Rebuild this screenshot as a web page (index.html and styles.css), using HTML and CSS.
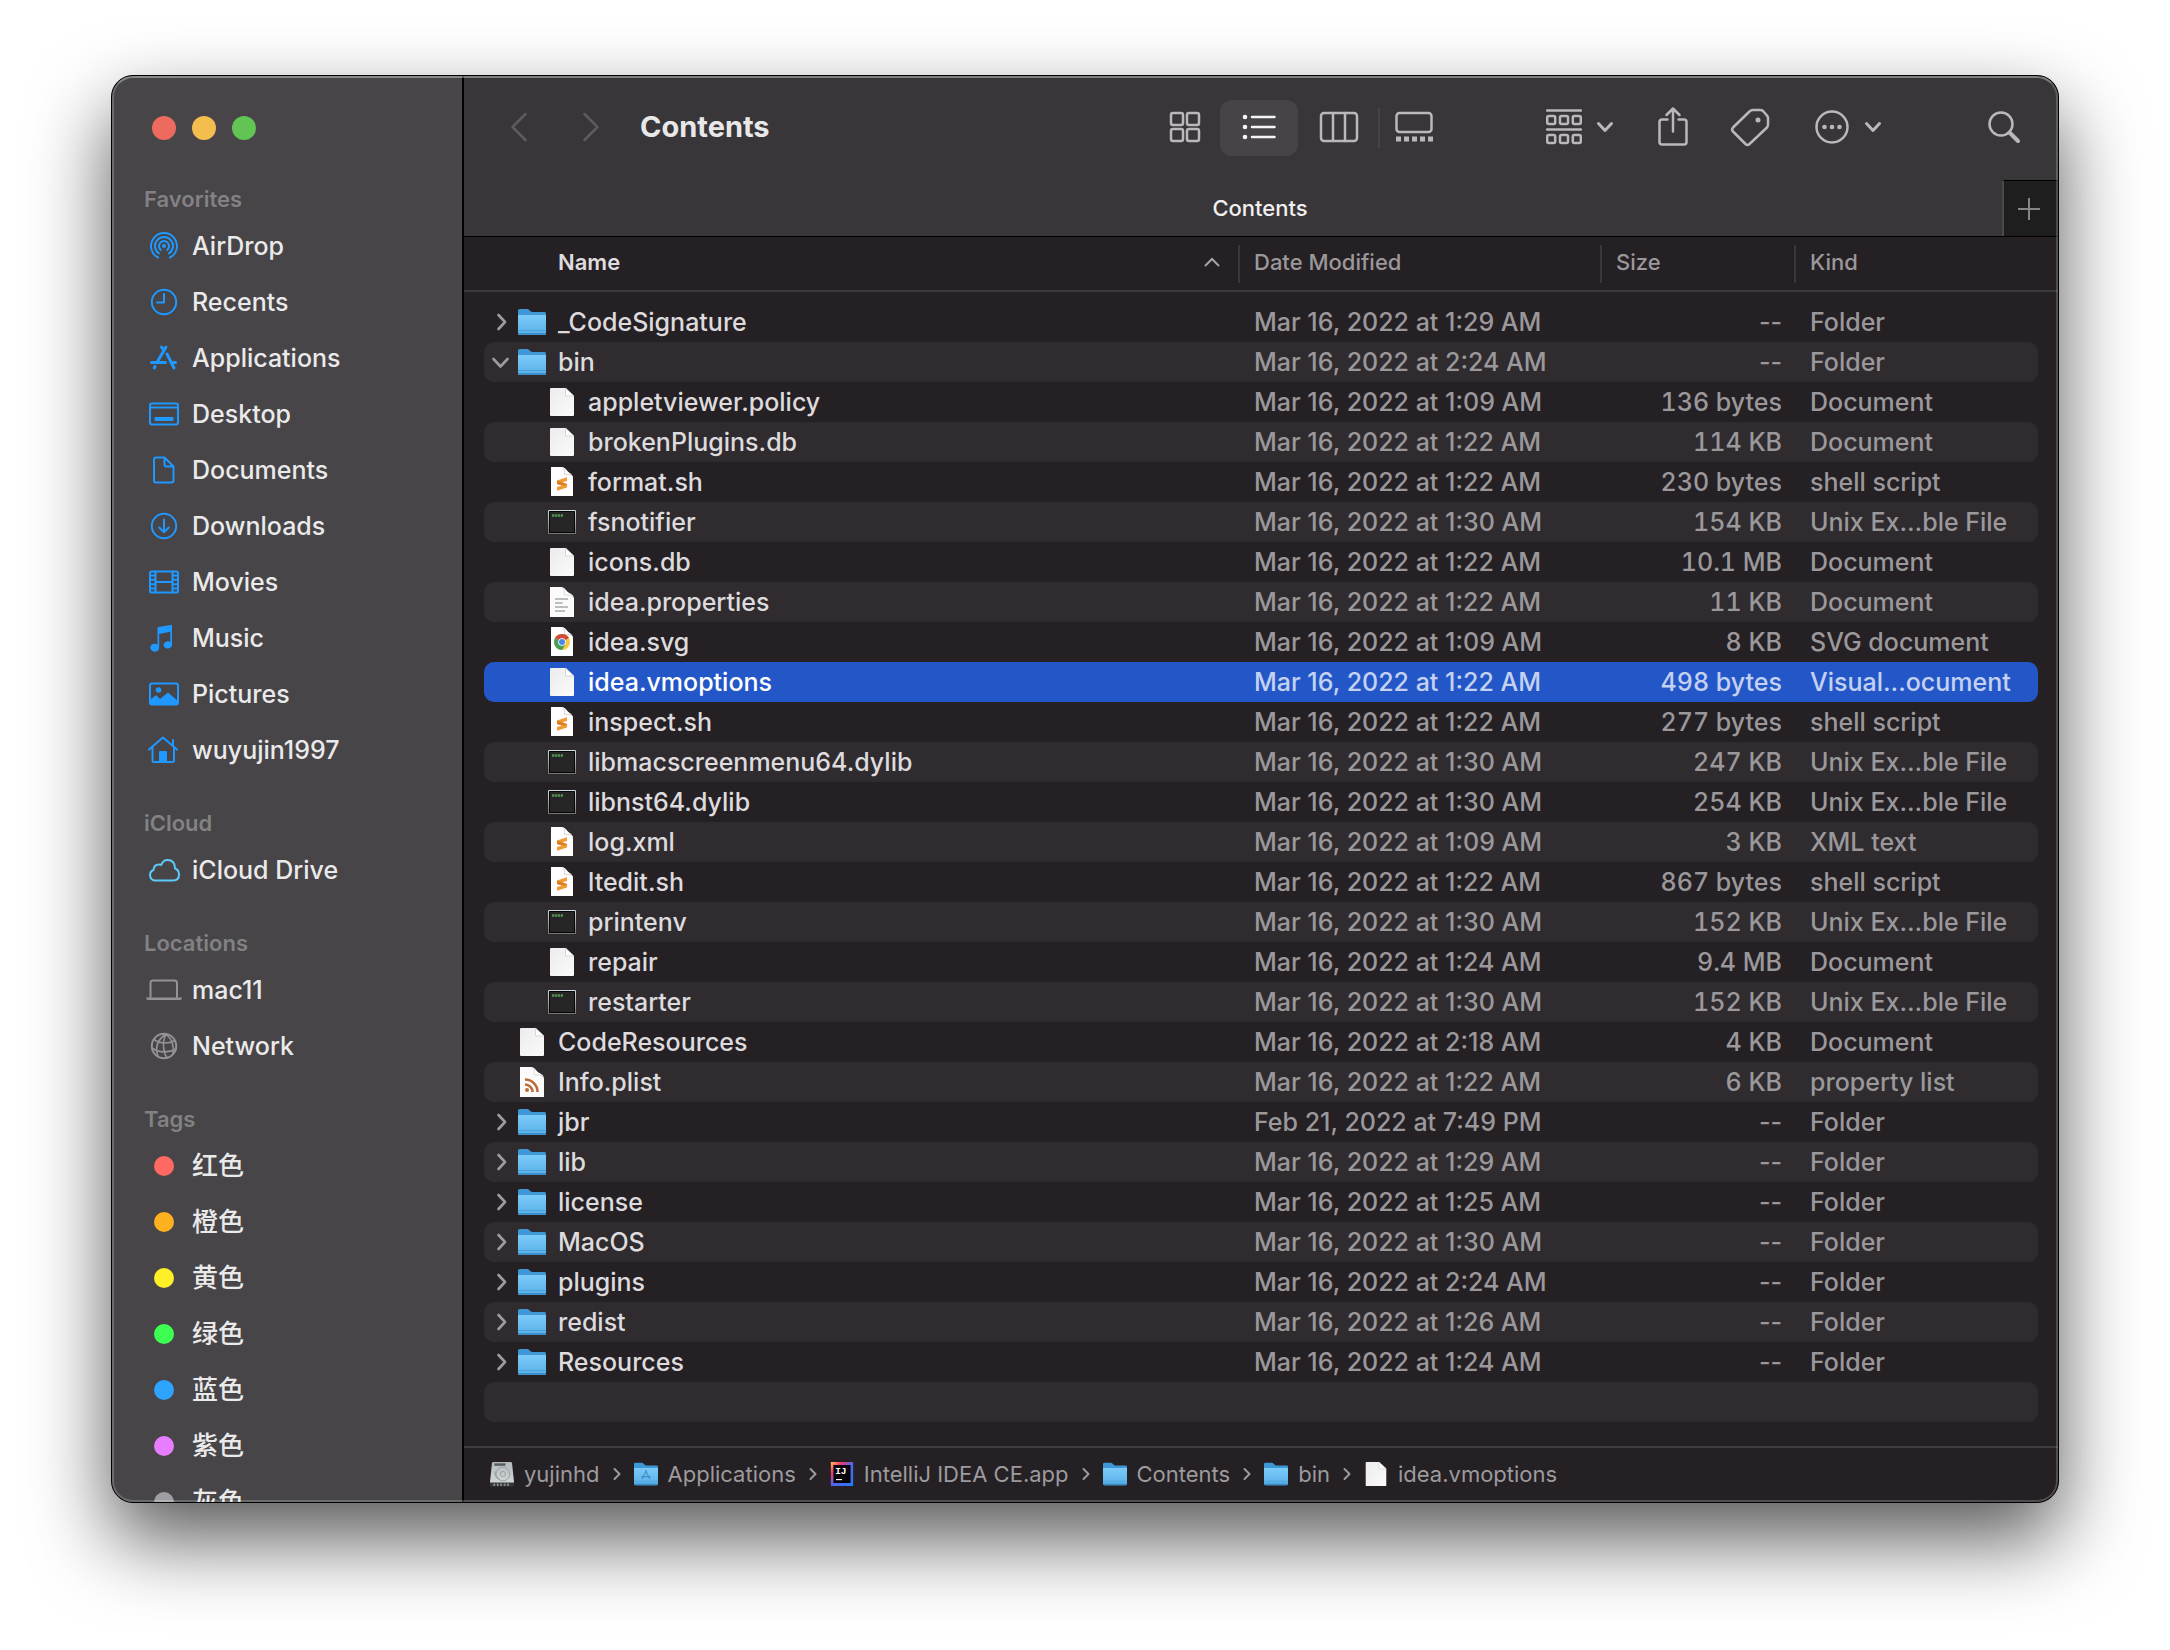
FILE: index.html
```html
<!DOCTYPE html>
<html lang="en">
<head>
<meta charset="utf-8">
<title>Contents</title>
<link rel="stylesheet" href="styles.css">
</head>
<body>
<svg class="defs" aria-hidden="true">
  <defs>
    <linearGradient id="g-folder" x1="0" y1="0" x2="0" y2="1"><stop offset="0" stop-color="#7bcbf8"/><stop offset="1" stop-color="#58b0e8"/></linearGradient>
    <linearGradient id="g-doc" x1="0" y1="0" x2="1" y2="1"><stop offset="0" stop-color="#ececec"/><stop offset="1" stop-color="#fafafa"/></linearGradient>
    <linearGradient id="g-term" x1="0" y1="0" x2="0" y2="1"><stop offset="0" stop-color="#cfdde6"/><stop offset="1" stop-color="#77777a"/></linearGradient>
    <linearGradient id="g-idea" x1="0" y1="0" x2="1" y2="1"><stop offset="0" stop-color="#fcc65a"/><stop offset=".25" stop-color="#f0386b"/><stop offset=".5" stop-color="#5a62f0"/><stop offset="1" stop-color="#1e7cf5"/></linearGradient>
    <linearGradient id="g-disk" x1="0" y1="0" x2="0" y2="1"><stop offset="0" stop-color="#b4b9bb"/><stop offset="1" stop-color="#d5dadd"/></linearGradient>
  </defs>
  <symbol id="folder" viewBox="0 0 28 30">
    <path d="M0 3.500Q0 2 1.500 2H9Q10.200 2 11 2.800L12.500 4.200Q13.300 5 14.500 5H26.500Q28 5 28 6.500V26H0Z" fill="#3f97d6"/>
    <path d="M0 8H28V26.500Q28 28 26.500 28H1.500Q0 28 0 26.500Z" fill="url(#g-folder)"/>
    <path d="M0 23.500H28" stroke="#4ca3dc"/>
    <path d="M0 26V26.500Q0 28 1.500 28H26.500Q28 28 28 26.500V26Z" fill="#3d8fca"/>
  </symbol>
  <symbol id="doc" viewBox="0 0 28 30">
    <path d="M3 1H17.500L26 9V28Q26 29 25 29H3Q2 29 2 28V2Q2 1 3 1Z" fill="url(#g-doc)"/>
    <path d="M17.500 1L26 9H18.500Q17.500 9 17.500 8Z" fill="#fff" stroke="#c6c6c8" stroke-width=".7"/>
  </symbol>
  <symbol id="sheet" viewBox="0 0 28 30">
    <path d="M3 0H14C17 0 19 4 21 5.500C23 7 25 8 25 11V29H3Z" fill="#fff"/>
    <path d="M15 0.500C17 2 16.500 5 16.700 7.500C19.500 7.400 23 7 24.600 9.800" fill="none" stroke="#d2d2d4"/>
  </symbol>
  <symbol id="sh" viewBox="0 0 28 30">
    <use href="#sheet" width="28" height="30"/>
    <path d="M9 13.500L19 10.200V14L14 15.600L19 17V20.500L9 23.800V20L14.200 18.400L9 17Z" fill="#f29a38"/>
    <path d="M9 13.500L19 17V18L14.200 18.400L9 17Z" fill="#dc7f22"/>
  </symbol>
  <symbol id="exec" viewBox="0 0 28 30">
    <rect x="0" y="3" width="28" height="24" rx="1" fill="url(#g-term)"/>
    <rect x="1" y="4" width="26" height="22" fill="#050505"/>
    <rect x="2" y="5" width="24" height="20" fill="#262626"/>
    <path d="M4 8.500H15" stroke="#5fae55" stroke-width="2.400" stroke-dasharray="2.300 .6" opacity=".8"/>
  </symbol>
  <symbol id="props" viewBox="0 0 28 30">
    <path d="M2 0H13C17 0 18 4 20.500 5.500C23 7 26 8 26 12V30H2Z" fill="#fbfbfb"/>
    <path d="M14 .5C17 2 16 5 16.500 8C20 7.500 24 8 25.500 11" fill="#fff" stroke="#dadadc"/>
    <path d="M7 12H20M7 16H14.500M7 20H20M7 24H17" stroke="#bdbdbd" stroke-width="1.800"/>
  </symbol>
  <symbol id="chrome" viewBox="0 0 28 30">
    <use href="#sheet" width="28" height="30"/>
    <circle cx="14" cy="15" r="8" fill="#f6c945"/>
    <path d="M14 15L7.100 11A8 8 0 0 1 20.900 11Z" fill="#d0493b"/>
    <path d="M14 15L7.100 11A8 8 0 0 0 14 23L17.500 17Z" fill="#4a9e5c"/>
    <circle cx="14" cy="15" r="3.800" fill="#fff"/><circle cx="14" cy="15" r="3" fill="#4a86ee"/>
  </symbol>
  <symbol id="plist" viewBox="0 0 28 30">
    <path d="M2 0H13C17 0 18 4 20.500 5.500C23 7 26 8 26 12V30H2Z" fill="#fbfbfb"/>
    <path d="M14 .5C17 2 16 5 16.500 8C20 7.500 24 8 25.500 11" fill="#fff" stroke="#dadadc"/>
    <circle cx="9" cy="23" r="2" fill="#bd6b3a"/>
    <path d="M7 17.500A7.500 7.500 0 0 1 14.500 25M7 12.500A12.500 12.500 0 0 1 19.500 25" fill="none" stroke="#bd6b3a" stroke-width="2.600"/>
  </symbol>
  <symbol id="appfolder" viewBox="0 0 28 30">
    <use href="#folder" width="28" height="30"/>
    <path d="M14.500 10.500L9.500 21M13.500 10.500L18.500 21M8.500 18H19.500" stroke="#3f8fca" stroke-width="1.300" fill="none"/>
  </symbol>
  <symbol id="disk" viewBox="0 0 28 30">
    <path d="M4 1H24Q25.500 1 25.700 2.500L28 24V29H0V24L2.300 2.500Q2.500 1 4 1Z" fill="url(#g-disk)"/>
    <rect x="5" y="2.500" width="13" height="3" fill="#5b5f61"/>
    <circle cx="15" cy="15" r="8" fill="none" stroke="#959b9e"/><circle cx="15" cy="15" r="3" fill="none" stroke="#959b9e"/>
    <path d="M6 12Q5 18 11 21" stroke="#858b8e" fill="none"/>
    <path d="M0 25H28V28Q28 29.500 26.500 29.500H1.500Q0 29.500 0 28Z" fill="#34383a"/>
    <path d="M4 27.500H24" stroke="#8b9092" stroke-width="3" stroke-dasharray="2 2"/>
  </symbol>
  <symbol id="closed" viewBox="0 0 20 20"><path d="M6.500 3L13 10L6.500 17" fill="none" stroke="currentColor" stroke-width="2.600" stroke-linecap="round" stroke-linejoin="round"/></symbol>
  <symbol id="open" viewBox="0 0 20 20"><path d="M1.500 7L8.500 14.500L15.500 7" fill="none" stroke="currentColor" stroke-width="2.600" stroke-linecap="round" stroke-linejoin="round"/></symbol>
  <symbol id="down" viewBox="0 0 18 12"><path d="M2.500 2.500L9 9.500L15.500 2.500" fill="none" stroke="currentColor" stroke-width="3" stroke-linecap="round" stroke-linejoin="round"/></symbol>
  <symbol id="sep" viewBox="0 0 8 14"><path d="M1.500 2L6.500 7L1.500 12" fill="none" stroke="currentColor" stroke-width="2" stroke-linecap="round" stroke-linejoin="round"/></symbol>
</svg>

<div class="window">
  <aside class="sidebar">
    <div class="lights">
      <button class="light light-close" aria-label="Close"></button>
      <button class="light light-min" aria-label="Minimize"></button>
      <button class="light light-zoom" aria-label="Zoom"></button>
    </div>
    <nav class="places">
      <h2>Favorites</h2>
      <a href="#airdrop"><svg viewBox="0 0 36 36"><path d="M12 29.500A13 13 0 1 1 24 29.500M13 25.500A9 9 0 1 1 23 25.500M14.800 21.900A5 5 0 1 1 21.200 21.900"/><circle cx="18" cy="18" r="2" class="fill"/></svg>AirDrop</a>
      <a href="#recents"><svg viewBox="0 0 36 36"><circle cx="18" cy="18" r="12.200"/><path d="M18 10V18.500H11"/></svg>Recents</a>
      <a href="#applications"><svg viewBox="0 0 36 36"><path class="thick" d="M15.500 7L17.800 10.500M20 7L11.500 21.500M5.500 22.500H19.500M21 14L28 28M25 22.500H29.500M9 26.500L8.300 28"/></svg>Applications</a>
      <a href="#desktop"><svg viewBox="0 0 36 36"><rect x="4" y="7.500" width="28" height="21" rx="2"/><path d="M4 11.500H32"/><rect class="fill" x="8.500" y="21" width="19" height="4" rx="1"/></svg>Desktop</a>
      <a href="#documents"><svg viewBox="0 0 36 36"><path d="M10 5.500H18.500L27.500 14.500V28.500Q27.500 30.500 25.500 30.500H10Q8 30.500 8 28.500V7.500Q8 5.500 10 5.500ZM18.500 6V12.500Q18.500 14.500 20.500 14.500H27"/></svg>Documents</a>
      <a href="#downloads"><svg viewBox="0 0 36 36"><circle cx="18" cy="18" r="12.200"/><path d="M18 11.500V24M13.200 19.500L18 24.200L22.800 19.500"/></svg>Downloads</a>
      <a href="#movies"><svg viewBox="0 0 36 36"><rect x="4" y="7.500" width="28" height="21" rx="1.500"/><path d="M9.500 7.500V28.500M26.500 7.500V28.500M9.500 18H26.500M4 11.500H9.500M4 15.800H9.500M4 20.200H9.500M4 24.500H9.500M26.500 11.500H32M26.500 15.800H32M26.500 20.200H32M26.500 24.500H32"/></svg>Movies</a>
      <a href="#music"><svg viewBox="0 0 36 36"><path class="fill" d="M11.500 8Q11.500 7.200 12.300 7L26 4.800V25A4.200 3.600 0 1 1 24.300 22V11.800L13.200 14V27A4.500 4 0 1 1 11.500 24.500Z"/></svg>Music</a>
      <a href="#pictures"><svg viewBox="0 0 36 36"><rect x="4" y="7.500" width="28" height="21" rx="2"/><circle class="fill" cx="12.500" cy="14" r="2.800"/><path class="fill" d="M4 24L10 19L14 23L22 16.500L32 25V28.500H4Z"/></svg>Pictures</a>
      <a href="#home"><svg viewBox="0 0 36 36"><path d="M3 17.500L17 5.500L31 17.500M6.500 15V28.500Q6.500 30 8 30H26.500Q28 30 28 28.500V15M27 13.500V8"/><path class="fill" d="M13 30V20Q13 19 14 19H20Q21 19 21 20V30Z"/></svg>wuyujin1997</a>
      <h2>iCloud</h2>
      <a href="#icloud"><svg class="sky" viewBox="0 0 36 36"><path d="M8.500 28.500A5.500 5.500 0 0 1 7.500 18Q8 12.500 13 12.500Q14.500 12.500 15.200 13Q17 8 21.500 8Q29 8 29 16.500Q33 18 33 22.500Q33 28.500 27 28.500Z"/></svg>iCloud Drive</a>
      <h2>Locations</h2>
      <a href="#mac11"><svg class="gray" viewBox="0 0 36 36"><path d="M4.500 26V11Q4.500 8.500 7 8.500H28.500Q31 8.500 31 11V26"/><path class="fill" d="M0 25.500H36Q36 28 34 28H2Q0 28 0 25.500Z"/></svg>mac11</a>
      <a href="#network"><svg class="gray" viewBox="0 0 36 36"><circle cx="18" cy="18" r="12.200"/><path class="thin" d="M20 6C11 12 9 20 12 28.500M20 6C16 14 17 24 21 30M20 6C27 12 28 20 27 26M8 11.500C14 16 23 16 29 12.500M6 20C13 25 23 25 30 21"/></svg>Network</a>
      <h2>Tags</h2>
      <a href="#red"><span class="tag tag-red"></span><span lang="zh">红色</span></a>
      <a href="#orange"><span class="tag tag-orange"></span><span lang="zh">橙色</span></a>
      <a href="#yellow"><span class="tag tag-yellow"></span><span lang="zh">黄色</span></a>
      <a href="#green"><span class="tag tag-green"></span><span lang="zh">绿色</span></a>
      <a href="#blue"><span class="tag tag-blue"></span><span lang="zh">蓝色</span></a>
      <a href="#purple"><span class="tag tag-purple"></span><span lang="zh">紫色</span></a>
      <a href="#gray"><span class="tag tag-gray"></span><span lang="zh">灰色</span></a>
    </nav>
  </aside>

  <main class="main">
    <header class="toolbar">
      <button class="nav-btn" aria-label="Back"><svg width="18" height="30" viewBox="0 0 18 30"><path d="M15.500 2L2.500 15L15.500 28"/></svg></button>
      <button class="nav-btn" aria-label="Forward"><svg width="18" height="30" viewBox="0 0 18 30"><path d="M2.500 2L15.500 15L2.500 28"/></svg></button>
      <h1>Contents</h1>
      <div class="views">
        <button class="view-btn view-first" aria-label="Icons"><svg width="32" height="32" viewBox="0 0 32 32"><rect x="2" y="2" width="12" height="12" rx="2"/><rect x="18" y="2" width="12" height="12" rx="2"/><rect x="2" y="18" width="12" height="12" rx="2"/><rect x="18" y="18" width="12" height="12" rx="2"/></svg></button>
        <button class="view-btn view-on" aria-label="List"><svg width="34" height="28" viewBox="0 0 34 28"><path d="M10 4H32.500M10 14H32.500M10 24H32.500"/><circle class="fill" cx="3" cy="4" r="2.300"/><circle class="fill" cx="3" cy="14" r="2.300"/><circle class="fill" cx="3" cy="24" r="2.300"/></svg></button>
        <button class="view-btn" aria-label="Columns"><svg width="40" height="32" viewBox="0 0 40 32"><rect x="2" y="2" width="36" height="28" rx="3"/><path d="M14 2V30M26 2V30"/></svg></button>
        <span class="divider"></span>
        <button class="view-btn view-last" aria-label="Gallery"><svg width="38" height="32" viewBox="0 0 38 32"><rect x="1.500" y="2" width="35" height="19" rx="3"/><path class="dashes" d="M1 28H38"/></svg></button>
      </div>
      <button class="tool tool-group" aria-label="Group"><svg width="36" height="38" viewBox="0 0 36 38"><path d="M1 2.500H35M1 21.500H35"/><rect x="1.200" y="8" width="8" height="8" rx="1.500"/><rect x="14" y="8" width="8" height="8" rx="1.500"/><rect x="26.800" y="8" width="8" height="8" rx="1.500"/><rect x="1.200" y="27" width="8" height="8" rx="1.500"/><rect x="14" y="27" width="8" height="8" rx="1.500"/><rect x="26.800" y="27" width="8" height="8" rx="1.500"/></svg><svg class="caret"><use href="#down"/></svg></button>
      <button class="tool tool-share" aria-label="Share"><svg width="32" height="42" viewBox="0 0 32 42"><path d="M10.500 13.500H5Q2.500 13.500 2.500 16V36Q2.500 38.500 5 38.500H27Q29.500 38.500 29.500 36V16Q29.500 13.500 27 13.500H21.500M16 25.500V2.500M9.500 9L16 2.500L22.500 9"/></svg></button>
      <button class="tool tool-tag" aria-label="Tags"><svg width="40" height="40" viewBox="0 0 40 40"><path d="M19.500 4.500Q21 3 23 3H30Q32 3 33 4L36.500 8Q38 9.500 38 11V17.500Q38 19 37 20.500L19.500 37Q17.500 39 15.500 37L3 24.500Q1.200 22.500 3 20.500Z"/><circle class="fill" cx="28" cy="13" r="2.500"/></svg></button>
      <button class="tool tool-more" aria-label="More"><svg width="36" height="36" viewBox="0 0 36 36"><circle cx="18" cy="18" r="15.500"/><circle class="fill" cx="10.500" cy="18" r="2.300"/><circle class="fill" cx="18" cy="18" r="2.300"/><circle class="fill" cx="25.500" cy="18" r="2.300"/></svg><svg class="caret"><use href="#down"/></svg></button>
      <button class="tool tool-search" aria-label="Search"><svg width="34" height="34" viewBox="0 0 34 34"><circle cx="14" cy="14" r="11.500"/><path class="handle" d="M22.500 22.500L31 31"/></svg></button>
    </header>
    <div class="tabs">
      <button class="tab">Contents</button>
      <button class="tab-add" aria-label="New tab"><svg width="22" height="22" viewBox="0 0 22 22"><path d="M11 0V22M0 11H22"/></svg></button>
    </div>

    <div class="files">
      <table>
        <thead>
          <tr><th class="c-name">Name<svg class="sort" viewBox="0 0 16 10"><path d="M1 9L8 2L15 9"/></svg></th><th>Date Modified</th><th>Size</th><th>Kind</th></tr>
        </thead>
        <tbody>
          <tr><td class="c-name"><button class="twist" aria-label="Expand"><svg><use href="#closed"/></svg></button><svg class="icon"><use href="#folder"/></svg>_CodeSignature</td><td>Mar 16, 2022 at 1:29 AM</td><td class="c-none">--</td><td>Folder</td></tr>
          <tr><td class="c-name"><button class="twist" aria-label="Collapse"><svg><use href="#open"/></svg></button><svg class="icon"><use href="#folder"/></svg>bin</td><td>Mar 16, 2022 at 2:24 AM</td><td class="c-none">--</td><td>Folder</td></tr>
          <tr><td class="c-name child"><svg class="icon"><use href="#doc"/></svg>appletviewer.policy</td><td>Mar 16, 2022 at 1:09 AM</td><td class="c-size">136 bytes</td><td>Document</td></tr>
          <tr><td class="c-name child"><svg class="icon"><use href="#doc"/></svg>brokenPlugins.db</td><td>Mar 16, 2022 at 1:22 AM</td><td class="c-size">114 KB</td><td>Document</td></tr>
          <tr><td class="c-name child"><svg class="icon"><use href="#sh"/></svg>format.sh</td><td>Mar 16, 2022 at 1:22 AM</td><td class="c-size">230 bytes</td><td>shell script</td></tr>
          <tr><td class="c-name child"><svg class="icon"><use href="#exec"/></svg>fsnotifier</td><td>Mar 16, 2022 at 1:30 AM</td><td class="c-size">154 KB</td><td>Unix Ex...ble File</td></tr>
          <tr><td class="c-name child"><svg class="icon"><use href="#doc"/></svg>icons.db</td><td>Mar 16, 2022 at 1:22 AM</td><td class="c-size">10.1 MB</td><td>Document</td></tr>
          <tr><td class="c-name child"><svg class="icon"><use href="#props"/></svg>idea.properties</td><td>Mar 16, 2022 at 1:22 AM</td><td class="c-size">11 KB</td><td>Document</td></tr>
          <tr><td class="c-name child"><svg class="icon"><use href="#chrome"/></svg>idea.svg</td><td>Mar 16, 2022 at 1:09 AM</td><td class="c-size">8 KB</td><td>SVG document</td></tr>
          <tr class="selected"><td class="c-name child"><svg class="icon"><use href="#doc"/></svg>idea.vmoptions</td><td>Mar 16, 2022 at 1:22 AM</td><td class="c-size">498 bytes</td><td>Visual...ocument</td></tr>
          <tr><td class="c-name child"><svg class="icon"><use href="#sh"/></svg>inspect.sh</td><td>Mar 16, 2022 at 1:22 AM</td><td class="c-size">277 bytes</td><td>shell script</td></tr>
          <tr><td class="c-name child"><svg class="icon"><use href="#exec"/></svg>libmacscreenmenu64.dylib</td><td>Mar 16, 2022 at 1:30 AM</td><td class="c-size">247 KB</td><td>Unix Ex...ble File</td></tr>
          <tr><td class="c-name child"><svg class="icon"><use href="#exec"/></svg>libnst64.dylib</td><td>Mar 16, 2022 at 1:30 AM</td><td class="c-size">254 KB</td><td>Unix Ex...ble File</td></tr>
          <tr><td class="c-name child"><svg class="icon"><use href="#sh"/></svg>log.xml</td><td>Mar 16, 2022 at 1:09 AM</td><td class="c-size">3 KB</td><td>XML text</td></tr>
          <tr><td class="c-name child"><svg class="icon"><use href="#sh"/></svg>ltedit.sh</td><td>Mar 16, 2022 at 1:22 AM</td><td class="c-size">867 bytes</td><td>shell script</td></tr>
          <tr><td class="c-name child"><svg class="icon"><use href="#exec"/></svg>printenv</td><td>Mar 16, 2022 at 1:30 AM</td><td class="c-size">152 KB</td><td>Unix Ex...ble File</td></tr>
          <tr><td class="c-name child"><svg class="icon"><use href="#doc"/></svg>repair</td><td>Mar 16, 2022 at 1:24 AM</td><td class="c-size">9.4 MB</td><td>Document</td></tr>
          <tr><td class="c-name child"><svg class="icon"><use href="#exec"/></svg>restarter</td><td>Mar 16, 2022 at 1:30 AM</td><td class="c-size">152 KB</td><td>Unix Ex...ble File</td></tr>
          <tr><td class="c-name leaf"><svg class="icon"><use href="#doc"/></svg>CodeResources</td><td>Mar 16, 2022 at 2:18 AM</td><td class="c-size">4 KB</td><td>Document</td></tr>
          <tr><td class="c-name leaf"><svg class="icon"><use href="#plist"/></svg>Info.plist</td><td>Mar 16, 2022 at 1:22 AM</td><td class="c-size">6 KB</td><td>property list</td></tr>
          <tr><td class="c-name"><button class="twist" aria-label="Expand"><svg><use href="#closed"/></svg></button><svg class="icon"><use href="#folder"/></svg>jbr</td><td>Feb 21, 2022 at 7:49 PM</td><td class="c-none">--</td><td>Folder</td></tr>
          <tr><td class="c-name"><button class="twist" aria-label="Expand"><svg><use href="#closed"/></svg></button><svg class="icon"><use href="#folder"/></svg>lib</td><td>Mar 16, 2022 at 1:29 AM</td><td class="c-none">--</td><td>Folder</td></tr>
          <tr><td class="c-name"><button class="twist" aria-label="Expand"><svg><use href="#closed"/></svg></button><svg class="icon"><use href="#folder"/></svg>license</td><td>Mar 16, 2022 at 1:25 AM</td><td class="c-none">--</td><td>Folder</td></tr>
          <tr><td class="c-name"><button class="twist" aria-label="Expand"><svg><use href="#closed"/></svg></button><svg class="icon"><use href="#folder"/></svg>MacOS</td><td>Mar 16, 2022 at 1:30 AM</td><td class="c-none">--</td><td>Folder</td></tr>
          <tr><td class="c-name"><button class="twist" aria-label="Expand"><svg><use href="#closed"/></svg></button><svg class="icon"><use href="#folder"/></svg>plugins</td><td>Mar 16, 2022 at 2:24 AM</td><td class="c-none">--</td><td>Folder</td></tr>
          <tr><td class="c-name"><button class="twist" aria-label="Expand"><svg><use href="#closed"/></svg></button><svg class="icon"><use href="#folder"/></svg>redist</td><td>Mar 16, 2022 at 1:26 AM</td><td class="c-none">--</td><td>Folder</td></tr>
          <tr><td class="c-name"><button class="twist" aria-label="Expand"><svg><use href="#closed"/></svg></button><svg class="icon"><use href="#folder"/></svg>Resources</td><td>Mar 16, 2022 at 1:24 AM</td><td class="c-none">--</td><td>Folder</td></tr>
          <tr><td class="c-name"></td><td></td><td></td><td></td></tr>
        </tbody>
      </table>
    </div>

    <footer class="path">
      <a href="#p1"><svg class="small"><use href="#disk"/></svg>yujinhd</a><svg class="sep"><use href="#sep"/></svg>
      <a href="#p2"><svg class="small"><use href="#appfolder"/></svg>Applications</a><svg class="sep"><use href="#sep"/></svg>
      <a href="#p3"><svg class="small" viewBox="0 0 28 30"><rect x="1" y="1" width="26" height="28" fill="url(#g-idea)"/><rect x="4" y="4.500" width="20" height="21" fill="#08040a"/><text x="6" y="15" class="idea-text">IJ</text><path d="M7 21.500H14" stroke="#fff" stroke-width="1.400"/></svg>IntelliJ IDEA CE.app</a><svg class="sep"><use href="#sep"/></svg>
      <a href="#p4"><svg class="small"><use href="#folder"/></svg>Contents</a><svg class="sep"><use href="#sep"/></svg>
      <a href="#p5"><svg class="small"><use href="#folder"/></svg>bin</a><svg class="sep"><use href="#sep"/></svg>
      <a href="#p6"><svg class="small"><use href="#doc"/></svg>idea.vmoptions</a>
    </footer>
  </main>
</div>
</body>
</html>
```
FILE: styles.css
```css
* { box-sizing: border-box; }

body {
  margin: 0;
  height: 100vh;
  padding: 75px 111px 147px;
  background: #fff;
  font-family: Inter, "Noto Sans CJK SC", sans-serif;
  font-size: 25px;
  font-weight: 500;
  line-height: 32px;
  color: #dddbdd;
}

button {
  margin: 0;
  padding: 0;
  border: 0;
  background: none;
  color: inherit;
  font: inherit;
}

a { color: inherit; text-decoration: none; }
h1, h2 { margin: 0; }
svg { flex: none; }
.defs { position: absolute; width: 0; height: 0; }
.idea-text { font: bold 11px "Liberation Mono", monospace; fill: #fff; }

.window {
  position: relative;
  display: flex;
  height: 100%;
  overflow: hidden;
  border: 1px solid #000;
  border-radius: 22px;
  background: #252024;
  box-shadow: 0 36px 80px rgba(0, 0, 0, .66);
}

/* light rim over the window edge */
.window::after {
  content: "";
  position: absolute;
  inset: 0;
  border: 2px solid rgba(255, 255, 255, .2);
  border-top-color: rgba(255, 255, 255, .36);
  border-radius: 21px;
  pointer-events: none;
}

/* Sidebar */
.sidebar {
  flex: none;
  width: 352px;
  padding-top: 40px;
  overflow: hidden;
  border-right: 2px solid #000;
  background: #474548;
}

.lights { display: flex; gap: 16px; padding-left: 40px; }
.light { width: 24px; height: 24px; border-radius: 50%; }
.light-close { background: #ed6a5e; }
.light-min { background: #f4be4f; }
.light-zoom { background: #61c454; }

.places { padding: 14px 20px 0 32px; }

.places h2 {
  margin-top: 26px;
  font-size: 22px;
  font-weight: 600;
  line-height: 38px;
  color: #838184;
}

.places a {
  display: flex;
  align-items: center;
  gap: 10px;
  height: 56px;
  padding-left: 2px;
  color: #ebeaeb;
}

.places [lang="zh"] { font-size: 26px; }

.places svg {
  width: 36px;
  height: 36px;
  fill: none;
  stroke: #1f98ff;
  stroke-width: 2;
  stroke-linecap: round;
  stroke-linejoin: round;
  color: #1f98ff;
}

.places svg.sky { stroke: #5ccbfb; }
.places svg.gray { stroke: #949295; color: #949295; }
.places .fill { fill: currentColor; stroke: none; }
.places .thick { stroke-width: 3; }
.places .thin { stroke-width: 1.6; }

.tag { width: 20px; height: 20px; margin: 0 8px; border-radius: 50%; }
.tag-red { background: #ff6961; }
.tag-orange { background: #ffb01f; }
.tag-yellow { background: #ffef26; }
.tag-green { background: #3cff51; }
.tag-blue { background: #2ea4ff; }
.tag-purple { background: #e97dff; }
.tag-gray { background: #a09ea5; }

/* Toolbar */
.main { display: flex; flex: 1; flex-direction: column; min-width: 0; }

.toolbar {
  display: flex;
  flex: none;
  align-items: center;
  height: 104px;
  padding: 0 24px 0 27px;
  background: #393639;
  color: #bab8ba;
}

.toolbar svg, .tab-add svg {
  fill: none;
  stroke: currentColor;
  stroke-width: 2.5;
  stroke-linecap: round;
  stroke-linejoin: round;
}

.toolbar button { display: flex; align-items: center; justify-content: center; height: 56px; padding-bottom: 2px; }
.toolbar .fill { fill: currentColor; stroke: none; }
.nav-btn { width: 56px; margin-right: 16px; color: #5d5b5e; }
.toolbar h1 { margin-left: 5px; padding-bottom: 2px; font-size: 29px; font-weight: 700; color: #e9e8e9; }
.views { display: flex; align-items: center; margin-left: auto; }
.view-btn { width: 78px; border-radius: 12px; }
.view-first { width: 70px; }
.view-on { margin-right: 2px; background: #464447; color: #f5f5f5; }
.view-last { width: 68px; }
.divider { width: 2px; height: 40px; background: #464447; }
.dashes { stroke-width: 5; stroke-linecap: butt; stroke-dasharray: 5 3; }
.tool { gap: 14px; width: 60px; }
.tool-group { width: 88px; margin-left: 88px; }
.toolbar .caret { width: 18px; height: 12px; }
.tool-share { margin-left: 19px; }
.tool-tag { margin-left: 17px; }
.tool-more { width: 84px; margin-left: 26px; }
.tool-search { margin-left: 84px; }
.handle { stroke-width: 4; }

/* Tabs */
.tabs {
  display: flex;
  flex: none;
  height: 57px;
  border-bottom: 1px solid #000;
  background: #393639;
}

.tab { flex: 1; padding-left: 54px; font-size: 22px; color: #f1f0f1; }

.tab-add {
  display: flex;
  align-items: center;
  justify-content: center;
  width: 56px;
  padding-right: 4px;
  border-top: 1px solid #000;
  border-left: 2px solid #4a484a;
  background: #1f1e1f;
  color: #878587;
}

.tab-add svg { stroke-width: 2; stroke-linecap: butt; }

/* File list */
.files { flex: 1; min-height: 0; overflow: hidden; }
table, thead, tbody { display: block; }
thead { border-bottom: 2px solid #3c393c; }
tbody { padding-top: 10px; }

tr {
  display: grid;
  grid-template-columns: minmax(0, 1fr) 362px 194px 244px;
  margin: 0 20px;
}

thead tr { height: 53px; align-items: center; }

th {
  height: 38px;
  padding: 0 0 0 14px;
  border-left: 2px solid #3a373a;
  font-size: 22px;
  font-weight: 500;
  line-height: 34px;
  text-align: left;
  color: #9a989a;
}

th.c-name {
  justify-content: space-between;
  padding: 0 18px 4px 74px;
  border: 0;
  font-weight: 600;
  color: #dedcde;
}

.sort { width: 16px; height: 10px; fill: none; stroke: #a5a3a5; stroke-width: 2; }
tbody tr { height: 40px; border-radius: 10px; }
tbody tr:nth-child(even) { background: #2f2b2f; }

td {
  padding: 0 0 0 16px;
  line-height: 40px;
  white-space: nowrap;
  color: #9a989a;
}

.c-name { display: flex; align-items: center; }
td.c-name { padding-left: 8px; color: #dddbdd; }
td.leaf { padding-left: 34px; }
td.child { padding-left: 64px; }
.c-size, .c-none { padding-right: 12px; text-align: right; }
.c-size { font-variant-numeric: tabular-nums; }
.twist { width: 20px; height: 20px; margin-right: 6px; color: #9d9b9d; }
.twist svg { display: block; width: 20px; height: 20px; }
.icon { width: 28px; height: 30px; margin-right: 12px; }
tbody tr.selected { background: #2357c8; }
.selected td { color: #c4d1f0; }
.selected td.c-name { color: #fff; }

/* Path bar */
.path {
  display: flex;
  flex: none;
  align-items: center;
  gap: 13px;
  height: 56px;
  padding: 0 26px 2px;
  border-top: 2px solid #3f3c3f;
  font-size: 22px;
  font-weight: 400;
  color: #9d9b9d;
}

.path a { display: flex; align-items: center; gap: 10px; white-space: nowrap; }
.small { width: 24px; height: 26px; }
.sep { width: 8px; height: 14px; }
```
